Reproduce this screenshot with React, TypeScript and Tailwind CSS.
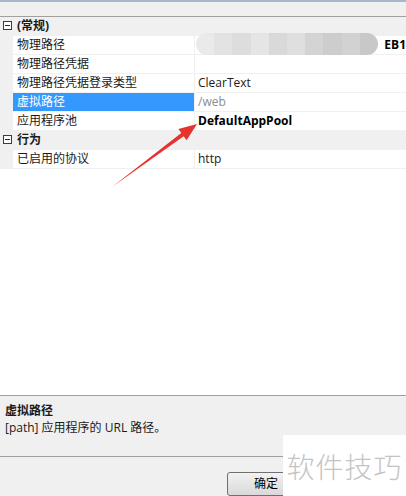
const CJK = "font-['Open_Sans','Noto_Sans_CJK_SC',sans-serif]";

type Row =
  | { kind: "cat"; name: string }
  | { kind: "prop"; name: string; value?: string; tone?: "gray" | "bold" | "blur"; selected?: boolean };

const ROWS: Row[] = [
  { kind: "cat", name: "(常规)" },
  { kind: "prop", name: "物理路径", tone: "blur" },
  { kind: "prop", name: "物理路径凭据" },
  { kind: "prop", name: "物理路径凭据登录类型", value: "ClearText" },
  { kind: "prop", name: "虚拟路径", value: "/web", tone: "gray", selected: true },
  { kind: "prop", name: "应用程序池", value: "DefaultAppPool", tone: "bold" },
  { kind: "cat", name: "行为" },
  { kind: "prop", name: "已启用的协议", value: "http" },
];

// mosaic blocks of the blurred path value
const BLUR = ["#e9e9e9", "#e2e2e2", "#dcdcdc", "#e4e4e4", "#d8d8d8", "#dedede", "#d2d2d2", "#cbcbcb", "#d0d0d0", "#c6c6c6"];

function Collapse() {
  return (
    <div className="w-[9px] h-[9px] border border-[#3c3c3c] flex items-center justify-center bg-white">
      <div className="w-[5px] h-px bg-[#2a2a2a]" />
    </div>
  );
}

function GridRow({ row }: { row: Row }) {
  if (row.kind === "cat") {
    return (
      <div className="h-[19px] flex items-center bg-[#f0f0f0] border-b border-[#f0f0f0]">
        <div className="w-[13px] flex justify-center pl-[2px]">
          <Collapse />
        </div>
        <span className="pl-[4px] text-[12px] font-bold text-[#1a1a1a]">{row.name}</span>
      </div>
    );
  }
  return (
    <div className="h-[19px] flex border-b border-[#f0f0f0] bg-white relative">
      <div className="w-[13px] bg-[#f0f0f0]" />
      <div
        className={
          "w-[181px] flex items-center pl-[4px] text-[12px] " +
          (row.selected ? "bg-[#3399ff] text-white" : "text-[#1a1a1a]")
        }
      >
        {row.name}
      </div>
      <div className="w-px bg-[#f0f0f0]" />
      <div
        className={
          "flex-1 flex items-center pl-[3px] text-[12px] overflow-hidden whitespace-nowrap " +
          (row.tone === "gray" ? "text-[#8c8c8c]" : row.tone === "bold" ? "font-bold text-black" : "text-[#1a1a1a]")
        }
      >
        {row.tone === "blur" ? (
          <>
            <div className="absolute left-[196px] top-[-3px] w-[182px] h-[22px] rounded-[11px] overflow-hidden flex opacity-95">
              {BLUR.map((c, i) => (
                <div key={i} className="flex-1 h-full" style={{ backgroundColor: c }} />
              ))}
            </div>
            <span className="ml-auto font-bold text-black">EB1</span>
          </>
        ) : (
          row.value
        )}
      </div>
    </div>
  );
}

function Arrow() {
  return (
    <svg className="absolute inset-0 pointer-events-none" width="406" height="496" viewBox="0 0 406 496">
      <polygon
        points="112,187 183.7,136.2 186.6,140.3 197,124 178.4,128.9 181.3,133"
        fill="#e8322f"
      />
    </svg>
  );
}

export default function App() {
  return (
    <div className={`${CJK} relative w-[406px] h-[496px] overflow-hidden bg-[#f0f0f0] flex flex-col`}>
      <div className="h-[2px] bg-[#a8b8cb]" />
      <div className="h-[15px] bg-[#f0f0f0] border-b border-[#a0a0a0]" />

      <div className="h-[382px] bg-white flex flex-col">
        {ROWS.map((r) => (
          <GridRow key={r.name} row={r} />
        ))}
      </div>

      <div className="h-[61px] border-t border-[#a0a0a0] flex flex-col px-[5px] pt-[6px] text-[12px] text-[#1a1a1a]">
        <span className="font-bold leading-[17px]">虚拟路径</span>
        <span className="leading-[17px]">[path] 应用程序的 URL 路径。</span>
      </div>
      <div className="border-t border-[#a0a0a0]" />

      <div className="flex-1 pl-[227px] pt-[13px]">
        <button className="w-[78px] h-[24px] rounded-[3px] border border-[#707070] bg-gradient-to-b from-[#f2f2f2] to-[#d9d9d9] text-[12px] text-black">
          确定
        </button>
      </div>

      <Arrow />

      <div className="absolute left-[283px] top-[435px] w-[123px] h-[61px] bg-white flex items-center justify-center">
        <span className="text-[28px] text-[#c4c4c4] font-light tracking-[1px] font-['Noto_Sans_CJK_SC',sans-serif]">软件技巧</span>
      </div>
    </div>
  );
}
